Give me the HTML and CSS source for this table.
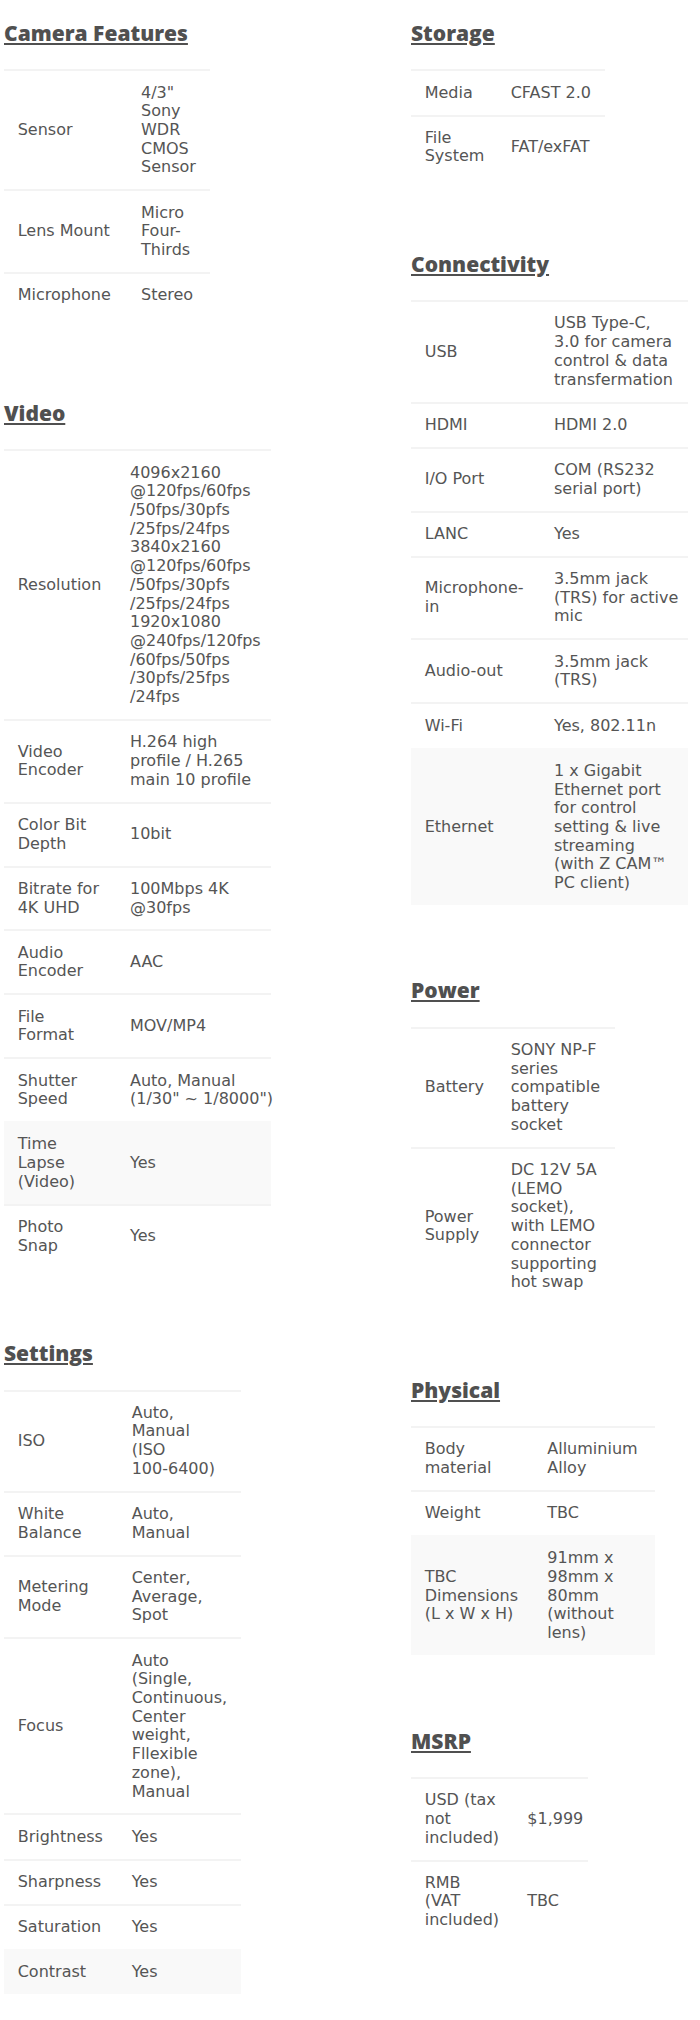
FILE: index.html
```html
<!DOCTYPE html>
<html lang="en">
<head>
<meta charset="utf-8">
<title>Specs</title>
<link rel="stylesheet" href="styles.css">
</head>
<body>
<div class="page">
  <div class="column">
    <section class="spec spec-camera">
      <h2 class="spec-title">Camera Features</h2>
      <div class="spec-table">
        <div class="row"><div class="cell">Sensor</div><div class="cell">4/3&quot;<br>Sony<br>WDR<br>CMOS<br>Sensor</div></div>
        <div class="row"><div class="cell">Lens Mount</div><div class="cell">Micro<br>Four-<br>Thirds</div></div>
        <div class="row"><div class="cell">Microphone</div><div class="cell">Stereo</div></div>
      </div>
    </section>

    <section class="spec spec-video">
      <h2 class="spec-title">Video</h2>
      <div class="spec-table">
        <div class="row"><div class="cell">Resolution</div><div class="cell">4096x2160<br>@120fps/60fps<br>/50fps/30pfs<br>/25fps/24fps<br>3840x2160<br>@120fps/60fps<br>/50fps/30pfs<br>/25fps/24fps<br>1920x1080<br>@240fps/120fps<br>/60fps/50fps<br>/30pfs/25fps<br>/24fps</div></div>
        <div class="row"><div class="cell">Video<br>Encoder</div><div class="cell">H.264 high<br>profile / H.265<br>main 10 profile</div></div>
        <div class="row"><div class="cell">Color Bit<br>Depth</div><div class="cell">10bit</div></div>
        <div class="row"><div class="cell">Bitrate for<br>4K UHD</div><div class="cell">100Mbps 4K<br>@30fps</div></div>
        <div class="row"><div class="cell">Audio<br>Encoder</div><div class="cell">AAC</div></div>
        <div class="row"><div class="cell">File<br>Format</div><div class="cell">MOV/MP4</div></div>
        <div class="row"><div class="cell">Shutter<br>Speed</div><div class="cell">Auto, Manual<br>(1/30&quot; ~ 1/8000&quot;)</div></div>
        <div class="row row-alt"><div class="cell">Time<br>Lapse<br>(Video)</div><div class="cell">Yes</div></div>
        <div class="row"><div class="cell">Photo<br>Snap</div><div class="cell">Yes</div></div>
      </div>
    </section>

    <section class="spec spec-settings">
      <h2 class="spec-title">Settings</h2>
      <div class="spec-table">
        <div class="row"><div class="cell">ISO</div><div class="cell">Auto,<br>Manual<br>(ISO<br>100-6400)</div></div>
        <div class="row"><div class="cell">White<br>Balance</div><div class="cell">Auto,<br>Manual</div></div>
        <div class="row"><div class="cell">Metering<br>Mode</div><div class="cell">Center,<br>Average,<br>Spot</div></div>
        <div class="row"><div class="cell">Focus</div><div class="cell">Auto<br>(Single,<br>Continuous,<br>Center<br>weight,<br>Fllexible<br>zone),<br>Manual</div></div>
        <div class="row"><div class="cell">Brightness</div><div class="cell">Yes</div></div>
        <div class="row"><div class="cell">Sharpness</div><div class="cell">Yes</div></div>
        <div class="row"><div class="cell">Saturation</div><div class="cell">Yes</div></div>
        <div class="row row-alt"><div class="cell">Contrast</div><div class="cell">Yes</div></div>
      </div>
    </section>
  </div>

  <div class="column">
    <section class="spec spec-storage">
      <h2 class="spec-title">Storage</h2>
      <div class="spec-table">
        <div class="row"><div class="cell">Media</div><div class="cell">CFAST 2.0</div></div>
        <div class="row"><div class="cell">File<br>System</div><div class="cell">FAT/exFAT</div></div>
      </div>
    </section>

    <section class="spec spec-connectivity">
      <h2 class="spec-title">Connectivity</h2>
      <div class="spec-table">
        <div class="row"><div class="cell">USB</div><div class="cell">USB Type-C,<br>3.0 for camera<br>control &amp; data<br>transfermation</div></div>
        <div class="row"><div class="cell">HDMI</div><div class="cell">HDMI 2.0</div></div>
        <div class="row"><div class="cell">I/O Port</div><div class="cell">COM (RS232<br>serial port)</div></div>
        <div class="row"><div class="cell">LANC</div><div class="cell">Yes</div></div>
        <div class="row"><div class="cell">Microphone-<br>in</div><div class="cell">3.5mm jack<br>(TRS) for active<br>mic</div></div>
        <div class="row"><div class="cell">Audio-out</div><div class="cell">3.5mm jack<br>(TRS)</div></div>
        <div class="row"><div class="cell">Wi-Fi</div><div class="cell">Yes, 802.11n</div></div>
        <div class="row row-alt"><div class="cell">Ethernet</div><div class="cell">1 x Gigabit<br>Ethernet port<br>for control<br>setting &amp; live<br>streaming<br>(with Z CAM™<br>PC client)</div></div>
      </div>
    </section>

    <section class="spec spec-power">
      <h2 class="spec-title">Power</h2>
      <div class="spec-table">
        <div class="row"><div class="cell">Battery</div><div class="cell">SONY NP-F<br>series<br>compatible<br>battery<br>socket</div></div>
        <div class="row"><div class="cell">Power<br>Supply</div><div class="cell">DC 12V 5A<br>(LEMO<br>socket),<br>with LEMO<br>connector<br>supporting<br>hot swap</div></div>
      </div>
    </section>

    <section class="spec spec-physical">
      <h2 class="spec-title">Physical</h2>
      <div class="spec-table">
        <div class="row"><div class="cell">Body<br>material</div><div class="cell">Alluminium<br>Alloy</div></div>
        <div class="row"><div class="cell">Weight</div><div class="cell">TBC</div></div>
        <div class="row row-alt"><div class="cell">TBC<br>Dimensions<br>(L x W x H)</div><div class="cell">91mm x<br>98mm x<br>80mm<br>(without<br>lens)</div></div>
      </div>
    </section>

    <section class="spec spec-msrp">
      <h2 class="spec-title">MSRP</h2>
      <div class="spec-table">
        <div class="row"><div class="cell">USD (tax<br>not<br>included)</div><div class="cell">$1,999</div></div>
        <div class="row"><div class="cell">RMB<br>(VAT<br>included)</div><div class="cell">TBC</div></div>
      </div>
    </section>
  </div>
</div>
</body>
</html>
```

FILE: styles.css
```css
html, body {
  margin: 0;
  padding: 0;
  background: #ffffff;
}

body {
  font-family: "DejaVu Sans", "Liberation Sans", sans-serif;
  font-size: 16px;
  line-height: 18.7px;
  color: #555555;
}

.page {
  display: grid;
  grid-template-columns: 407px 289px;
  align-items: start;
  padding: 19px 0 0 4px;
}

.column {
  display: flex;
  flex-direction: column;
  align-items: flex-start;
}

.spec + .spec {
  margin-top: 71.5px;
}

.spec-camera {
  margin-bottom: 10.5px;
}

.spec-title {
  margin: 0 0 22.3px;
  font-family: "Open Sans", "DejaVu Sans", sans-serif;
  font-weight: 800;
  font-size: 21px;
  line-height: 28px;
  color: #505050;
  text-decoration: underline;
  text-decoration-thickness: 1.5px;
  text-underline-offset: 2px;
}

.spec-table {
  display: flex;
  flex-direction: column;
}

.row {
  display: grid;
  grid-template-columns: var(--c1) var(--c2);
  border-top: 2px solid #f3f3f3;
}

.row-alt {
  background: #f9f9f9;
  border-top-color: #f9f9f9;
}

.cell {
  align-self: center;
  padding: 12.25px 0 12.25px 13.7px;
  white-space: nowrap;
}

.spec-camera { --c1: 123.3px; --c2: 82.7px; }
.spec-video { --c1: 112.3px; --c2: 154.7px; }
.spec-settings { --c1: 114px; --c2: 122.7px; }
.spec-storage { --c1: 86px; --c2: 108px; }
.spec-connectivity { --c1: 129.3px; --c2: 147.7px; }
.spec-power { --c1: 86px; --c2: 118px; }
.spec-physical { --c1: 122.6px; --c2: 121.4px; }
.spec-msrp { --c1: 102.6px; --c2: 74.7px; }
```
